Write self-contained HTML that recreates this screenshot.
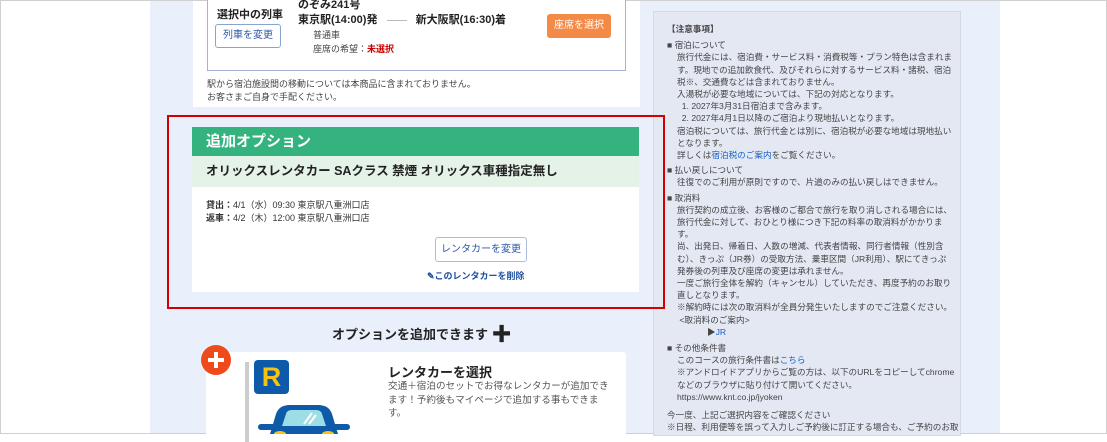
<!DOCTYPE html>
<html><head><meta charset="utf-8"><style>
*{margin:0;padding:0;box-sizing:border-box}
body{width:1107px;height:434px;overflow:hidden;background:#fff;font-family:"Liberation Sans","Noto Sans CJK JP",sans-serif;color:#333;position:relative}
.a{position:absolute}
.t{font-size:9px;line-height:13px;color:#444;white-space:nowrap}
.r p{font-size:8.6px;line-height:12.2px;color:#444;white-space:nowrap}
.lnk{color:#1a5fc4}
</style></head><body>
<div class="a" style="left:0;top:0;width:1107px;height:434px;border:1px solid #d0d0d0"></div>
<div class="a" style="left:150px;top:1px;width:850px;height:432px;background:#e9effb"></div>
<div class="a" style="left:193px;top:1px;width:447px;height:106px;background:#fff"></div>
<!-- train box -->
<div class="a" style="left:207px;top:0;width:419px;height:71px;border:1px solid #9fb4d6;border-top:none;background:#fff"></div>
<div class="a" style="left:217px;top:6px;font-size:11px;font-weight:bold;color:#222">選択中の列車</div>
<div class="a" style="left:215px;top:24px;width:66px;height:24px;border:1px solid #8aa4d0;border-radius:3px;font-size:10px;color:#2a58a8;text-align:center;line-height:22px">列車を変更</div>
<div class="a" style="left:298px;top:-4px;font-size:11px;font-weight:bold;color:#222">のぞみ241号</div>
<div class="a" style="left:298px;top:11px;font-size:11px;font-weight:bold;color:#222">東京駅(14:00)発 <span style="display:inline-block;width:20px;height:1px;background:#bbb;vertical-align:middle;margin:0 6px"></span> 新大阪駅(16:30)着</div>
<div class="a t" style="left:313px;top:29px">普通車</div>
<div class="a t" style="left:313px;top:43px">座席の希望：<b style="color:#c00">未選択</b></div>
<div class="a" style="left:547px;top:14px;width:64px;height:24px;background:#f38a48;border-radius:3px;color:#fff;font-size:10px;text-align:center;line-height:24px">座席を選択</div>
<div class="a t" style="left:207px;top:78px">駅から宿泊施設間の移動については本商品に含まれておりません。</div>
<div class="a t" style="left:207px;top:91px">お客さまご自身で手配ください。</div>
<!-- right panel -->
<div class="a r" style="left:653px;top:11px;width:308px;height:425px;background:#e3e8f3;border:1px solid #d3d9e5;padding:11px 0 0 13px">
<p style="font-weight:bold;margin-bottom:4px">【注意事項】</p>
<p>■ 宿泊について</p>
<div style="padding-left:10px">
<p>旅行代金には、宿泊費・サービス料・消費税等・プラン特色は含まれま</p>
<p>す。現地での追加飲食代、及びそれらに対するサービス料・諸税、宿泊</p>
<p>税※、交通費などは含まれておりません。</p>
<p>入湯税が必要な地域については、下記の対応となります。</p>
<p>&nbsp;&nbsp;1. 2027年3月31日宿泊まで含みます。</p>
<p>&nbsp;&nbsp;2. 2027年4月1日以降のご宿泊より現地払いとなります。</p>
<p>宿泊税については、旅行代金とは別に、宿泊税が必要な地域は現地払い</p>
<p>となります。</p>
<p>詳しくは<span class="lnk">宿泊税のご案内</span>をご覧ください。</p></div>
<p style="margin-top:3px">■ 払い戻しについて</p>
<p style="padding-left:10px">往復でのご利用が原則ですので、片道のみの払い戻しはできません。</p>
<p style="margin-top:3px">■ 取消料</p>
<div style="padding-left:10px">
<p>旅行契約の成立後、お客様のご都合で旅行を取り消しされる場合には、</p>
<p>旅行代金に対して、おひとり様につき下記の料率の取消料がかかりま</p>
<p>す。</p>
<p>尚、出発日、帰着日、人数の増減、代表者情報、同行者情報（性別含</p>
<p>む）、きっぷ（JR券）の受取方法、乗車区間（JR利用）、駅にてきっぷ</p>
<p>発券後の列車及び座席の変更は承れません。</p>
<p>一度ご旅行全体を解約（キャンセル）していただき、再度予約のお取り</p>
<p>直しとなります。</p>
<p>※解約時には次の取消料が全員分発生いたしますのでご注意ください。</p>
<p>&nbsp;&lt;取消料のご案内&gt;</p>
<p style="padding-left:30px">▶<span class="lnk">JR</span></p></div>
<p style="margin-top:4px">■ その他条件書</p>
<div style="padding-left:10px">
<p>このコースの旅行条件書は<span class="lnk">こちら</span></p>
<p>※アンドロイドアプリからご覧の方は、以下のURLをコピーしてchrome</p>
<p>などのブラウザに貼り付けて開いてください。</p>
<p>https://www.knt.co.jp/jyoken</p></div>
<p style="margin-top:6px">今一度、上記ご選択内容をご確認ください</p>
<p>※日程、利用便等を誤って入力しご予約後に訂正する場合も、ご予約のお取</p>
</div>
<!-- red box -->
<div class="a" style="left:167px;top:115px;width:498px;height:194px;border:2.5px solid #d40000;z-index:5"></div>
<div class="a" style="left:192px;top:127px;width:447px;height:29px;background:#34b37f;color:#fff;font-size:15px;font-weight:bold;line-height:29px;padding-left:14px">追加オプション</div>
<div class="a" style="left:192px;top:156px;width:447px;height:31px;background:#e4f2e8;font-size:12.5px;font-weight:bold;color:#222;line-height:31px;padding-left:14px">オリックスレンタカー SAクラス 禁煙 オリックス車種指定無し</div>
<div class="a" style="left:192px;top:187px;width:447px;height:105px;background:#fff"></div>
<div class="a" style="left:206px;top:199px;font-size:9px;line-height:13px;color:#333"><b>貸出：</b>4/1（水）09:30 東京駅八重洲口店<br><b>返車：</b>4/2（木）12:00 東京駅八重洲口店</div>
<div class="a" style="left:435px;top:237px;width:92px;height:25px;border:1px solid #a9bcd8;border-radius:3px;font-size:10px;color:#2a58a8;text-align:center;line-height:23px">レンタカーを変更</div>
<div class="a" style="left:427px;top:269px;font-size:9px;font-weight:bold;color:#1d4fa0">✎このレンタカーを削除</div>
<!-- add options -->
<div class="a" style="left:332px;top:318px;font-size:13px;font-weight:bold;color:#222">オプションを追加できます <span style="font-size:20px;vertical-align:-2px">✚</span></div>
<div class="a" style="left:206px;top:352px;width:420px;height:90px;background:#fff;border-radius:3px"></div>
<div class="a" style="left:201px;top:345px;width:30px;height:30px;border-radius:50%;background:#ef4a1c"></div>
<div class="a" style="left:208px;top:358px;width:16px;height:4px;background:#fff"></div>
<div class="a" style="left:214px;top:352px;width:4px;height:16px;background:#fff"></div>
<div class="a" style="left:245px;top:362px;width:4px;height:80px;background:#ccc"></div>
<div class="a" style="left:254px;top:360px;width:35px;height:34px;background:#0d5aa8;border-radius:4px;color:#f6c214;font-size:27px;font-weight:bold;text-align:center;line-height:34px">R</div>
<svg class="a" style="left:256px;top:402px" width="96" height="32"><path d="M14 32 L20 12 Q23 3 34 3 L62 3 Q73 3 76 12 L82 32Z" fill="#0d5aa8"/><path d="M26 24 L30 12 Q31 8 36 8 L60 8 Q65 8 66 12 L70 24Z" fill="#9ddde6"/><rect x="2" y="22" width="18" height="6" rx="3" fill="#0d5aa8"/><rect x="76" y="22" width="18" height="6" rx="3" fill="#0d5aa8"/><path d="M48 22 L56 11 M53 22 L60 13" stroke="#fff" stroke-width="2"/><ellipse cx="24" cy="32" rx="6" ry="3" fill="#f6c214"/><ellipse cx="72" cy="32" rx="6" ry="3" fill="#f6c214"/></svg>
<div class="a" style="left:388px;top:362px;font-size:13px;font-weight:bold;color:#222">レンタカーを選択</div>
<div class="a" style="left:388px;top:380px;font-size:9.6px;line-height:13.5px;color:#555">交通＋宿泊のセットでお得なレンタカーが追加でき<br>ます！予約後もマイページで追加する事もできま<br>す。</div>
</body></html>
